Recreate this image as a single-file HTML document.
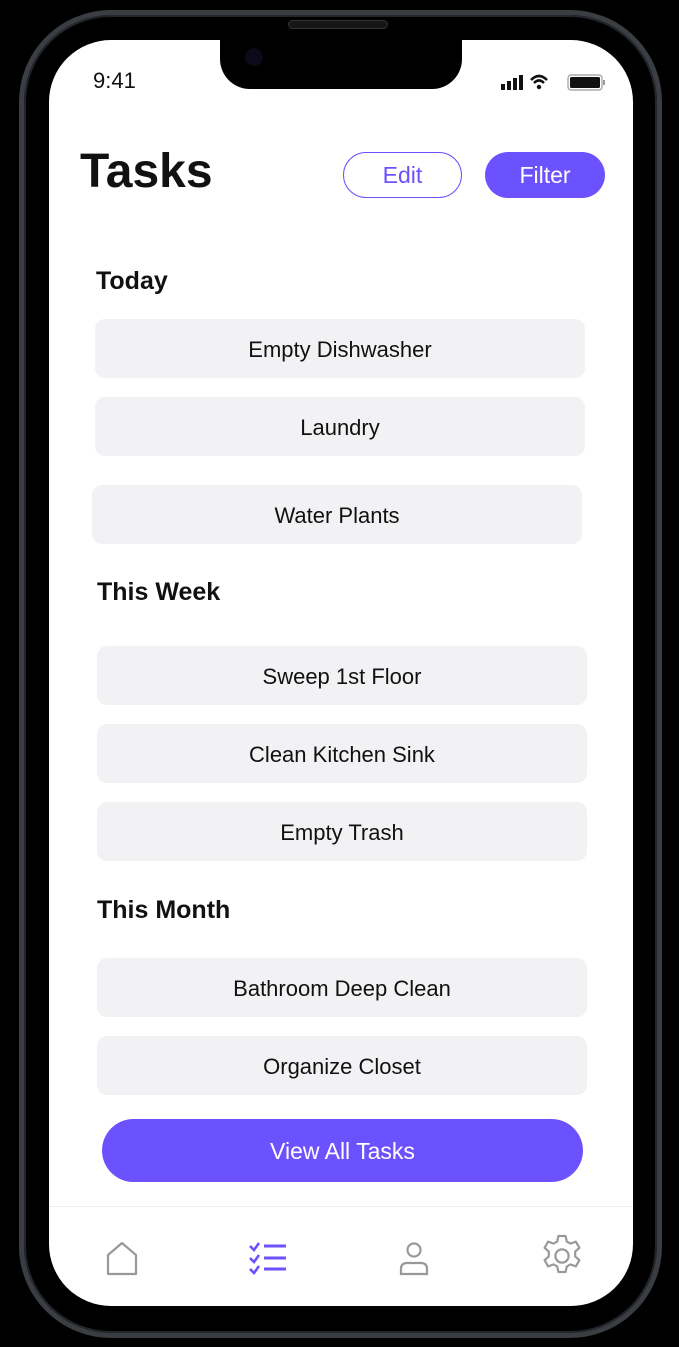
<!DOCTYPE html>
<html><head><meta charset="utf-8"><style>
*{margin:0;padding:0;box-sizing:border-box}
body{width:679px;height:1347px;background:#000;position:relative;overflow:hidden;font-family:"Liberation Sans",sans-serif}
.frame{position:absolute;left:19px;top:10px;width:643px;height:1328px;border-radius:92px;border:5px solid #3a3e42;box-shadow:inset 0 0 0 2px #22252a}
.screen{position:absolute;left:49px;top:40px;width:584px;height:1266px;background:#fff;border-radius:62px;overflow:hidden}
.notch{position:absolute;left:171px;top:-2px;width:242px;height:51px;background:#000;border-radius:0 0 30px 30px}
.spk{position:absolute;left:288px;top:20px;width:100px;height:9px;border-radius:5px;background:#161616;border:1px solid #333}
.time{position:absolute;left:44px;top:28px;font-size:22px;color:#111}
.t{position:absolute;left:31px;top:104px;font-size:48px;font-weight:bold;color:#111}
.btn{position:absolute;top:112px;height:46px;border-radius:23px;font-size:23px;text-align:center;line-height:46px}
.edit{left:294px;width:119px;border:1.5px solid #6c52ff;color:#6c52ff;line-height:44px}
.filter{left:436px;width:120px;background:#6c52ff;color:#fff}
.h{position:absolute;font-size:25px;font-weight:bold;color:#111}
.c{position:absolute;width:490px;height:59px;background:#f2f2f4;border-radius:10px;text-align:center;line-height:61px;font-size:22px;color:#111}
.va{position:absolute;left:53px;top:1079px;width:481px;height:63px;border-radius:32px;background:#6c52ff;color:#fff;font-size:23px;text-align:center;line-height:65px}
.nav{position:absolute;left:0;top:1166px;width:584px;height:100px;border-top:1px solid #eee}
</style></head><body>
<div class="frame"></div>
<div class="spk"></div>
<div class="screen">
<div class="notch"></div>
<div style="position:absolute;left:196px;top:8px;width:18px;height:18px;border-radius:50%;background:#0a0a18"></div>
<div class="time">9:41</div>
<svg style="position:absolute;left:452px;top:32px" width="110" height="22" viewBox="0 0 110 22">
<rect x="0" y="12" width="4" height="6" fill="#111"/><rect x="6" y="9" width="4" height="9" fill="#111"/><rect x="12" y="6" width="4" height="12" fill="#111"/><rect x="18" y="3" width="4" height="15" fill="#111"/>
<path d="M30 8 Q38 0 46 8" stroke="#111" stroke-width="2.5" fill="none"/><path d="M33 11 Q38 6 43 11" stroke="#111" stroke-width="2.5" fill="none"/><circle cx="38" cy="15" r="2.2" fill="#111"/>
<rect x="67" y="3" width="34" height="15" rx="3" fill="none" stroke="#999" stroke-width="1.2"/><rect x="69" y="5" width="30" height="11" rx="1.5" fill="#111"/><rect x="102" y="8" width="2" height="5" fill="#999"/>
</svg>
<div class="t">Tasks</div>
<div class="btn edit">Edit</div>
<div class="btn filter">Filter</div>
<div class="h" style="left:47px;top:227px">Today</div>
<div class="c" style="left:46px;top:279px">Empty Dishwasher</div>
<div class="c" style="left:46px;top:357px">Laundry</div>
<div class="c" style="left:43px;top:445px">Water Plants</div>
<div class="h" style="left:48px;top:538px">This Week</div>
<div class="c" style="left:48px;top:606px">Sweep 1st Floor</div>
<div class="c" style="left:48px;top:684px">Clean Kitchen Sink</div>
<div class="c" style="left:48px;top:762px">Empty Trash</div>
<div class="h" style="left:48px;top:856px">This Month</div>
<div class="c" style="left:48px;top:918px">Bathroom Deep Clean</div>
<div class="c" style="left:48px;top:996px">Organize Closet</div>
<div class="va">View All Tasks</div>
<div class="nav">
<svg style="position:absolute;left:56px;top:34px" width="34" height="36" viewBox="0 0 34 36"><path d="M3 33 L3 14 L17 2 L31 14 L31 33 Z" fill="none" stroke="#999" stroke-width="2.2" stroke-linejoin="round"/></svg>
<svg style="position:absolute;left:200px;top:34px" width="40" height="36" viewBox="0 0 40 36"><path d="M1 5 L5 9 L10 2 M1 17 L5 21 L10 14 M1 28 L5 32 L10 25" fill="none" stroke="#6c52ff" stroke-width="2.6"/><path d="M15 5 H37 M15 17 H37 M15 28 H37" stroke="#6c52ff" stroke-width="3"/></svg>
<svg style="position:absolute;left:350px;top:34px" width="30" height="36" viewBox="0 0 30 36"><circle cx="15" cy="9" r="6.5" fill="none" stroke="#999" stroke-width="2.2"/><path d="M2 33 V28 Q2 22 8 22 H22 Q28 22 28 28 V33 Z" fill="none" stroke="#999" stroke-width="2.2"/></svg>
<svg style="position:absolute;left:489px;top:25px" width="48" height="48" viewBox="0 0 24 24"><path fill="none" stroke="#999" stroke-width="1.1" stroke-linejoin="round" d="M10.2 1.5h3.6l.6 2.8 1.8 1 2.7-1 1.8 3.1-2.1 1.9v2.4l2.1 1.9-1.8 3.1-2.7-1-1.8 1-.6 2.8h-3.6l-.6-2.8-1.8-1-2.7 1-1.8-3.1 2.1-1.9v-2.4l-2.1-1.9 1.8-3.1 2.7 1 1.8-1z" transform="translate(0 0.5)"/><circle cx="12" cy="12" r="3.3" fill="none" stroke="#999" stroke-width="1.1"/></svg>
</div>
</div>
</body></html>
